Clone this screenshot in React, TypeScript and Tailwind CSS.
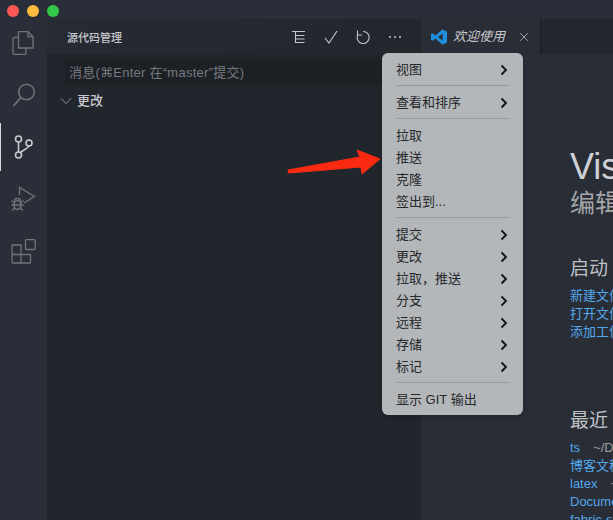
import { ChevronDown, X } from "lucide-react";

const font = { fontFamily: '"Liberation Sans", "Noto Sans CJK SC", sans-serif' };

const menuGroups = [
  [{ label: "视图", sub: true }],
  [{ label: "查看和排序", sub: true }],
  [
    { label: "拉取" },
    { label: "推送" },
    { label: "克隆" },
    { label: "签出到..." },
  ],
  [
    { label: "提交", sub: true },
    { label: "更改", sub: true },
    { label: "拉取，推送", sub: true },
    { label: "分支", sub: true },
    { label: "远程", sub: true },
    { label: "存储", sub: true },
    { label: "标记", sub: true },
  ],
  [{ label: "显示 GIT 输出" }],
];

function Chevron() {
  return (
    <svg className="-translate-x-[1px]" width="8" height="12" viewBox="0 0 8 12" fill="none" stroke="#111317" strokeWidth="1.8">
      <path d="M1.5 1.5 6 6l-4.5 4.5" />
    </svg>
  );
}

function ActivityBar() {
  return (
    <div className="w-[47px] shrink-0 flex flex-col items-center bg-[#2a2e38]">
      <svg className="mt-[12px] -translate-x-[1px]" width="22" height="24" viewBox="0 0 22 24" fill="none" stroke="#6f737b" strokeWidth="1.3">
        <path d="M6.500.7h9.500l5 5V17H6.500z" />
        <path d="M16 .7v5h5" />
        <path d="M6.500 6.500H2.500a1.500 1.500 0 0 0-1.500 1.500V22a1.500 1.500 0 0 0 1.500 1.500h10a1.500 1.500 0 0 0 1.500-1.500v-5" />
      </svg>
      <svg className="mt-[28px]" width="24" height="25" viewBox="0 0 24 25" fill="none" stroke="#6f737b" strokeWidth="1.5">
        <circle cx="14.500" cy="9" r="7.800" />
        <path d="M9 14.500 1.500 23" strokeWidth="1.800" />
      </svg>
      <div className="relative w-full h-[48px] mt-[15px] flex items-center justify-center">
        <div className="absolute left-0 top-0 w-[1px] h-[48px] bg-[#d7d9dd]" />
        <svg width="20" height="24" viewBox="0 0 20 24" fill="none" stroke="#ccced2" strokeWidth="1.500">
          <circle cx="4.500" cy="4" r="3" />
          <circle cx="4.500" cy="20" r="3" />
          <circle cx="15" cy="8" r="3" />
          <path d="M4.500 7v10M6.500 17.500c1-2 7-3 8.500-6.700" />
        </svg>
      </div>
      <svg className="mt-[15px]" width="26" height="26" viewBox="0 0 26 26" fill="none" stroke="#6f737b" strokeWidth="1.300">
        <path d="M8.500 9V1.500L23.500 10.500 13 17" />
        <ellipse cx="6.500" cy="19" rx="3.500" ry="4.500" strokeWidth="1.600" />
        <path d="M3.500 15c0-3.500 6-3.500 6 0M3.500 19h6M.500 14.500l2.500 2M12.500 14.500l-2.500 2M.500 19h2.500M12.500 19H10M1 24.500l2.500-2.500M12 24.500 9.500 22" />
      </svg>
      <svg className="mt-[27px]" width="25" height="25" viewBox="0 0 25 25" fill="none" stroke="#6f737b" strokeWidth="1.300">
        <rect x="14.500" y=".7" width="9.800" height="9.800" rx="1" />
        <path d="M1 6h9v9.500h9.500V23a1 1 0 0 1-1 1H2a1 1 0 0 1-1-1z" />
        <path d="M1 15.500h9M10 15.500V24" />
      </svg>
    </div>
  );
}

function Sidebar() {
  return (
    <div className="w-[374px] shrink-0 flex flex-col bg-[#21252c] text-[#c6c8cc]">
      <div className="h-[35px] shrink-0 flex items-center bg-gradient-to-r from-[#262a32] to-[#22262d]">
        <span className="ml-[20px] pt-[3px] text-[11px] font-medium text-[#c6c8cc]">源代码管理</span>
        <div className="ml-auto mr-[19px] flex items-center gap-[18px]">
          <svg width="14" height="14" viewBox="0 0 14 14" fill="none" stroke="#c4c6ca" strokeWidth="1.100">
            <path d="M0 1.500h13M3.500 1.500v11h9M3.500 5.500h9M3.500 9h9" />
          </svg>
          <svg width="14" height="14" viewBox="0 0 14 14" fill="none" stroke="#c4c6ca" strokeWidth="1.100">
            <path d="M1 8l4 5L13 1" />
          </svg>
          <svg width="14" height="14" viewBox="0 0 14 14" fill="none" stroke="#c4c6ca" strokeWidth="1.100">
            <path d="M1.500 .5v4.500H6M1.700 5A6 6 0 1 0 7 1.500" />
          </svg>
          <svg width="14" height="14" viewBox="0 0 14 14" fill="#c4c6ca">
            <circle cx="2" cy="7" r="1" />
            <circle cx="7" cy="7" r="1" />
            <circle cx="12" cy="7" r="1" />
          </svg>
        </div>
      </div>
      <div className="mt-[5px] ml-[18px] mr-[18px] h-[26px] shrink-0 flex items-center bg-[#1d2025] pl-[4px] pt-[2px] text-[13px] tracking-[0.25px] text-[#777a80] whitespace-pre">
        消息(<span style={{ fontFamily: '"DejaVu Sans", sans-serif' }}>⌘</span>Enter 在“master”提交)
      </div>
      <div className="mt-[5px] flex items-center pl-[9px] h-[22px] text-[13px] font-medium text-[#c6c8cc]">
        <ChevronDown size={20} strokeWidth={1} color="#a8aaae" />
        <span className="ml-[1px]">更改</span>
      </div>
    </div>
  );
}

function Editor() {
  return (
    <div className="flex-1 min-w-0 flex flex-col bg-[#292d36] overflow-hidden">
      <div className="h-[35px] shrink-0 flex bg-[#22262d]">
        <div className="w-[120px] shrink-0 flex items-center bg-[#292d36] border-r border-[#191b20]">
          <svg className="ml-[10px]" width="16" height="16" viewBox="0 0 16 16">
            <path d="M11.400 0.400 16 2.500v11L11.400 15.700 4.500 9.400 1.500 11.700 0 11V5l1.500-.7 3 2.300z" fill="#1f8fdc" />
            <path d="M11.600 4.600 7 8l4.600 3.400z" fill="#292d36" />
          </svg>
          <span className="ml-[6px] text-[13px] italic text-[#c8cace] whitespace-nowrap">欢迎使用</span>
          <X className="ml-[12px]" size={14} strokeWidth={1.3} color="#c8cace" />
        </div>
      </div>
      <div className="pl-[149px] pt-[91px] whitespace-nowrap">
        <div className="text-[36px] leading-[44px] text-[#cfd1d4]">Visual Studio Code</div>
        <div className="text-[25px] leading-[28px] text-[#a3a5a9]">编辑进化</div>
        <div className="mt-[40px] text-[19px] leading-[24px] text-[#bfc1c5]">启动</div>
        <div className="mt-[6px] text-[13px] leading-[18px] text-[#52a8ec]">
          <div>新建文件</div>
          <div>打开文件夹...</div>
          <div>添加工作区文件夹...</div>
        </div>
        <div className="mt-[68px] text-[19px] leading-[24px] text-[#bfc1c5]">最近</div>
        <div className="mt-[6px] text-[13px] leading-[18px] text-[#52a8ec]">
          <div>ts<span className="ml-[13px] text-[#9c9ea3]">~/Documents</span></div>
          <div>博客文稿</div>
          <div>latex<span className="ml-[13px] text-[#9c9ea3]">~/Documents</span></div>
          <div>Documents</div>
          <div>fabric-samples</div>
        </div>
      </div>
    </div>
  );
}

function GitMenu() {
  return (
    <div className="absolute left-[382px] top-[53px] w-[141px] rounded-[6px] bg-[#b4b7ba] py-[5px] text-[13px] leading-[22px] text-[#26282c] shadow-md">
      {menuGroups.map((group, i) => (
        <div key={i}>
          {i > 0 && <div className="mx-[14px] my-[5px] h-[1px] bg-[#98999d]" />}
          {group.map((item) => (
            <div key={item.label} className="h-[22px] pl-[14px] pr-[14px] pt-[1px] flex items-center justify-between">
              <span>{item.label}</span>
              {item.sub && <Chevron />}
            </div>
          ))}
        </div>
      ))}
    </div>
  );
}

export default function App() {
  return (
    <div className="relative w-[613px] h-[520px] overflow-hidden flex flex-col bg-[#2a2e38]" style={font}>
      <div className="h-[19px] shrink-0 flex items-center gap-[8px] pl-[7px] pt-[3px] bg-[#2a2e38]">
        <div className="w-[12px] h-[12px] rounded-full bg-[#fc5753]" />
        <div className="w-[12px] h-[12px] rounded-full bg-[#fdbc40]" />
        <div className="w-[12px] h-[12px] rounded-full bg-[#33c748]" />
      </div>
      <div className="flex-1 min-h-0 flex">
        <ActivityBar />
        <Sidebar />
        <Editor />
      </div>
      <GitMenu />
      <svg className="absolute left-[285px] top-[145px]" width="100" height="35" viewBox="0 0 100 35">
        <path d="M3 25 75 12 72 5 95 14 77 29 76 22 3.500 28z" fill="#fb2a10" stroke="#fb2a10" strokeWidth="1" strokeLinejoin="round" />
      </svg>
    </div>
  );
}
